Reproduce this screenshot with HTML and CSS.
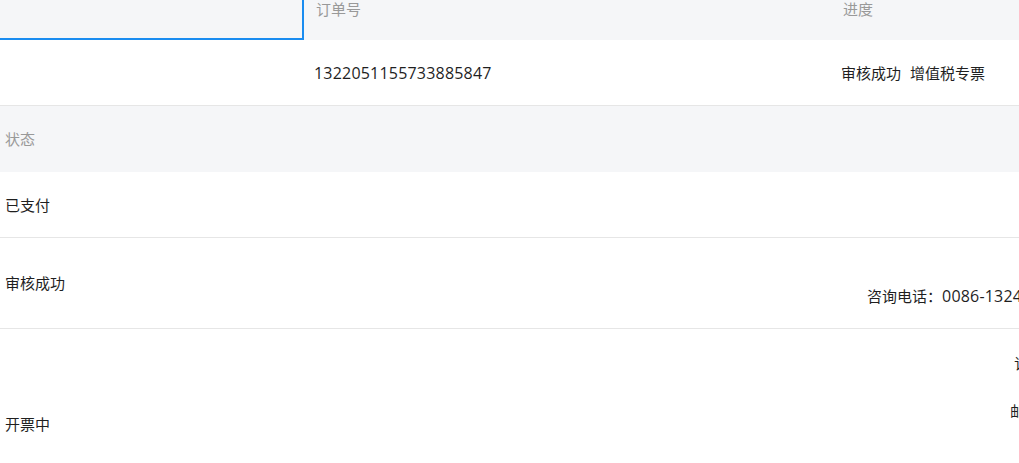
FILE: index.html
```html
<!DOCTYPE html>
<html lang="zh-CN">
<head>
    <meta charset="UTF-8">
    <meta name="viewport" content="width=device-width, initial-scale=1.0">
    <title>订单进度</title>
    <link rel="stylesheet" href="styles.css">
</head>
<body>

    <!-- Order table -->
    <div class="order-table">
        <div class="row head">
            <div class="cell cell-select"></div>
            <div class="cell cell-no">订单号</div>
            <div class="cell cell-progress">进度</div>
        </div>
        <div class="row order">
            <div class="cell cell-select"></div>
            <div class="cell cell-no"><span class="num">1322051155733885847</span></div>
            <div class="cell cell-progress">审核成功<span class="invoice-type">增值税专票</span></div>
        </div>
    </div>

    <!-- Status list -->
    <div class="status-list">
        <div class="row status-head">
            <div class="cell">状态</div>
        </div>
        <div class="row status-paid">
            <div class="cell">已支付</div>
        </div>
        <div class="row status-audit">
            <div class="cell">审核成功</div>
            <div class="cell side-note">咨询电话：<span class="num">0086-13241234567</span></div>
        </div>
        <div class="row status-invoice">
            <div class="cell">开票中</div>
            <div class="side-info">
                <div class="info-line info-first">订单发票正在开具</div>
                <div class="info-line info-second">邮寄地址：北京市朝阳区</div>
            </div>
        </div>
    </div>

</body>
</html>
```

FILE: styles.css
```css
body {
    margin: 0;
    font-family: "Open Sans", "Noto Sans CJK SC", sans-serif;
    font-size: 15px;
    color: #1f1f1f;
    overflow: hidden;
    background-color: #fff;
}

.row {
    display: flex;
    white-space: nowrap;
}

.cell {
    line-height: 16px;
}

.num {
    font-size: 16px;
    letter-spacing: 0.2px;
}

/* top table */
.head {
    height: 40px;
    background-color: #f5f6f8;
    color: #999;
}

.head .cell {
    padding-top: 1px;
}

.cell-select {
    width: 302px;
    flex-shrink: 0;
}

.head .cell-select {
    height: 37px;
    border-right: 2px solid #1a8cf0;
    border-bottom: 2px solid #1a8cf0;
}

.cell-no {
    width: 539px;
    box-sizing: border-box;
    flex-shrink: 0;
    padding-left: 12px;
}

.invoice-type {
    margin-left: 9px;
}

.order {
    height: 65px;
    align-items: center;
    border-bottom: 1px solid #e6e6e6;
}

/* status list */
.status-list .cell {
    padding-left: 5px;
}

.status-head {
    height: 66px;
    align-items: center;
    background-color: #f5f6f8;
    color: #999;
}

.status-paid {
    height: 65px;
    align-items: center;
    border-bottom: 1px solid #e6e6e6;
}

.status-audit {
    height: 90px;
    align-items: center;
    border-bottom: 1px solid #e6e6e6;
}

.status-audit .side-note {
    margin-left: 802px;
    padding-left: 0;
    margin-top: 26px;
}

.status-invoice {
    height: 190px;
    align-items: center;
}

.side-info {
    align-self: flex-start;
    margin-left: 960px;
}

.info-line {
    line-height: 16px;
}

.info-first {
    margin-top: 26px;
    margin-left: 4px;
}

.info-second {
    margin-top: 32px;
}
```
